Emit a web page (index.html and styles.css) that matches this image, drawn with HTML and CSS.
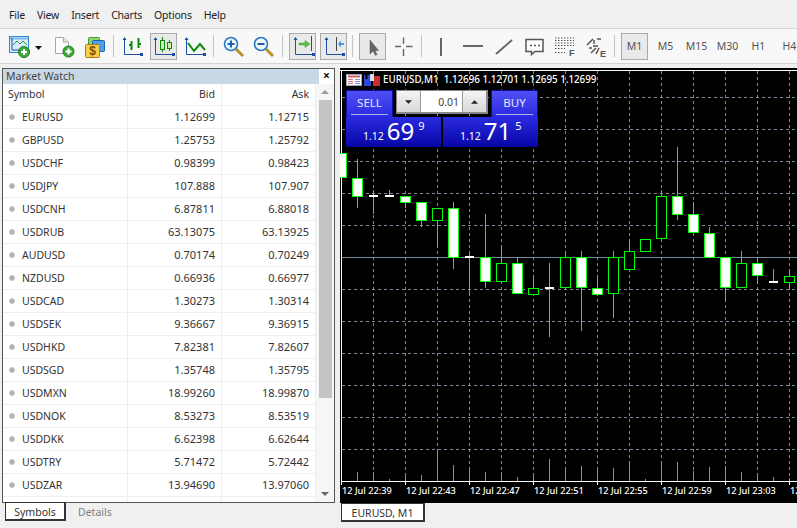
FILE: index.html
```html
<!DOCTYPE html>
<html lang="en">
<head>
<meta charset="utf-8">
<title>Market Watch</title>
<link rel="stylesheet" href="styles.css">
</head>
<body>
<div class="app">
  <nav class="menu">
    <span>File</span><span>View</span><span>Insert</span><span>Charts</span><span>Options</span><span>Help</span>
  </nav>
  <div class="toolbar">
    <div class="tool"><svg viewBox="0 0 27 27"><rect x="3.500" y="3.500" width="19" height="16" fill="#d8ecfa" stroke="#2f86d0"/><path d="M4 5.500H22" stroke="#7dbbe8" stroke-width="2"/><path d="M6 5V17H21" fill="none" stroke="#1a4fa5"/><path d="M7 12l4-4 3 3 3-3 4 4" fill="none" stroke="#2c9a3c"/><circle cx="18" cy="19" r="5.500" fill="#3fa93a" stroke="#1f7a25"/><path d="M15 19h6M18 16v6" stroke="#fff" stroke-width="2"/></svg></div>
    <div class="drop"><svg viewBox="0 0 14 27"><path d="M2 13h7l-3.500 4z" fill="#111"/></svg></div>
    <div class="tool"><svg viewBox="0 0 27 27"><path d="M4.500 4.500H12.500L17.500 9V20.500H4.500Z" fill="#fdfdfd" stroke="#a8a8a8"/><path d="M12.500 4.500V9H17.500" fill="#e4e4e4" stroke="#a8a8a8"/><circle cx="17.500" cy="18.500" r="5.500" fill="#3fa93a" stroke="#1f7a25"/><path d="M14.500 18.500h6M17.500 15.500v6" stroke="#fff" stroke-width="2"/></svg></div>
    <div class="tool"><svg viewBox="0 0 27 27"><rect x="6.500" y="4.500" width="11" height="10" rx="1" fill="#8ed46c" stroke="#3f9a3a"/><rect x="10.500" y="7.500" width="12" height="11" rx="1" fill="#4f9fe6" stroke="#1e5fb0"/><rect x="3.500" y="11.500" width="14" height="13" rx="1" fill="#f7cf4a" stroke="#a87d12"/><text x="10.500" y="22" class="dollar">$</text></svg></div>
    <div class="sep tight"></div>
    <div class="tool"><svg viewBox="0 0 27 27"><path class="axis" d="M5.500 5V21.500H22"/><path class="axhead" d="M3.500 7l2-3 2 3zM21 20h3v3h-3z"/><path d="M12.500 8V17M10 12h2.500M19.500 5V15M19.500 11H22" fill="none" stroke="#0c8a0c" stroke-width="2"/></svg></div>
    <div class="tool on"><svg viewBox="0 0 27 27"><path class="axis" d="M5.500 5V21.500H23"/><path class="axhead" d="M3.500 7l2-3 2 3zM22 20h3v3h-3z"/><path d="M12.500 4V19M19.500 7V18" stroke="#0c8a0c"/><rect x="10.500" y="7.500" width="4" height="9" fill="#c9f5a8" stroke="#0c8a0c"/><rect x="17.500" y="9.500" width="4" height="6" fill="#c9f5a8" stroke="#0c8a0c"/></svg></div>
    <div class="tool"><svg viewBox="0 0 27 27"><path class="axis" d="M5.500 5V21.500H23"/><path class="axhead" d="M3.500 7l2-3 2 3zM22 20h3v3h-3z"/><path d="M7 10l6 8 6-7 5 6" fill="none" stroke="#0c8a0c" stroke-width="2"/></svg></div>
    <div class="sep pushed"></div>
    <div class="tool"><svg viewBox="0 0 27 27"><path d="M16 16l7 7" stroke="#b8922a" stroke-width="3"/><circle cx="11" cy="11" r="6.500" fill="#eef6fd" stroke="#2a76c4" stroke-width="1.600"/><path d="M7.500 11h7M11 7.500v7" stroke="#1e5fb0" stroke-width="2"/></svg></div>
    <div class="tool"><svg viewBox="0 0 27 27"><path d="M15 16l7 7" stroke="#b8922a" stroke-width="3"/><circle cx="10" cy="11" r="6.500" fill="#eef6fd" stroke="#2a76c4" stroke-width="1.600"/><path d="M6.500 11h7" stroke="#1e5fb0" stroke-width="2"/></svg></div>
    <div class="sep"></div>
    <div class="tool on"><svg viewBox="0 0 27 27"><path class="axis" d="M6.500 5V21.500H25"/><path class="axhead" d="M4.500 7l2-3 2 3zM23 20h3v3h-3z"/><path d="M22.500 3V18" stroke="#444"/><path d="M10 10h6V7.500l5 3.500-5 3.500V12h-6z" fill="#5cc23c" stroke="#3f9a3a" stroke-width=".5"/></svg></div>
    <div class="tool on"><svg viewBox="0 0 27 27"><path class="axis" d="M6.500 5V21.500H24"/><path class="axhead" d="M4.500 7l2-3 2 3zM22 20h3v3h-3z"/><path d="M16.500 4V18" stroke="#444"/><path d="M24 10h-3V7.500L18 11l3 3.500V12h3z" fill="#4b92e8"/></svg></div>
    <div class="sep pushed"></div>
    <div class="tool on"><svg viewBox="0 0 27 27"><path d="M11 7V21L14 18L16.500 22.500L18 21.500L16 17.500H19.500Z" fill="#666" stroke="#555" stroke-width=".5"/></svg></div>
    <div class="tool"><svg viewBox="0 0 27 27"><path d="M13.500 4.500V11M13.500 16V23M5 13.500H11M16 13.500H22.500" stroke="#666" stroke-width="1.400"/></svg></div>
    <div class="sep"></div>
    <div class="tool"><svg viewBox="0 0 27 27"><path d="M13 5V23" stroke="#666" stroke-width="2"/></svg></div>
    <div class="tool"><svg viewBox="0 0 27 27"><path d="M4 13H24" stroke="#666" stroke-width="2"/></svg></div>
    <div class="tool"><svg viewBox="0 0 27 27"><path d="M6 21L22 7" stroke="#666" stroke-width="2"/></svg></div>
    <div class="tool"><svg viewBox="0 0 27 27"><path d="M5 6.500H22V18.500H14L10.500 21.500V18.500H5Z" fill="#fff" stroke="#555" stroke-width="1.500"/><path d="M9 12.500h2M13 12.500h2M17 12.500h2" stroke="#555" stroke-width="1.500"/></svg></div>
    <div class="tool"><svg viewBox="0 0 27 27"><path d="M3 5h19M3 7.500h19M3 10h19M3 12.500h19" stroke="#555" stroke-dasharray="1.500 1.500"/><path d="M3 15.500h10M3 19.500h10" stroke="#555" stroke-dasharray="1.500 1.500"/><text x="17" y="23" class="tag">F</text></svg></div>
    <div class="tool"><svg viewBox="0 0 27 27"><path d="M4 12l6-6M11 11V7M14 6h4M8 20l5-5M16 15l-3 6" stroke="#555" stroke-width="1.500"/><path d="M10 13h5M6 15h3" stroke="#555" stroke-width="1.500"/><text x="17" y="24" class="tag">E</text></svg></div>
    <div class="sep"></div>
    <div class="tool on period">M1</div>
    <div class="tool period">M5</div>
    <div class="tool period">M15</div>
    <div class="tool period">M30</div>
    <div class="tool period">H1</div>
    <div class="tool period">H4</div>
  </div>

  <main class="workspace">
    <section class="watch">
      <div class="watch-title"><span>Market Watch</span><span class="close">×</span></div>
      <div class="watch-body">
        <div class="quotes">
          <div class="row head"><span class="sym">Symbol</span><span class="num">Bid</span><span class="num">Ask</span></div>
          <div class="row"><span class="sym"><i class="dot"></i>EURUSD</span><span class="num">1.12699</span><span class="num">1.12715</span></div>
          <div class="row"><span class="sym"><i class="dot"></i>GBPUSD</span><span class="num">1.25753</span><span class="num">1.25792</span></div>
          <div class="row"><span class="sym"><i class="dot"></i>USDCHF</span><span class="num">0.98399</span><span class="num">0.98423</span></div>
          <div class="row"><span class="sym"><i class="dot"></i>USDJPY</span><span class="num">107.888</span><span class="num">107.907</span></div>
          <div class="row"><span class="sym"><i class="dot"></i>USDCNH</span><span class="num">6.87811</span><span class="num">6.88018</span></div>
          <div class="row"><span class="sym"><i class="dot"></i>USDRUB</span><span class="num">63.13075</span><span class="num">63.13925</span></div>
          <div class="row"><span class="sym"><i class="dot"></i>AUDUSD</span><span class="num">0.70174</span><span class="num">0.70249</span></div>
          <div class="row"><span class="sym"><i class="dot"></i>NZDUSD</span><span class="num">0.66936</span><span class="num">0.66977</span></div>
          <div class="row"><span class="sym"><i class="dot"></i>USDCAD</span><span class="num">1.30273</span><span class="num">1.30314</span></div>
          <div class="row"><span class="sym"><i class="dot"></i>USDSEK</span><span class="num">9.36667</span><span class="num">9.36915</span></div>
          <div class="row"><span class="sym"><i class="dot"></i>USDHKD</span><span class="num">7.82381</span><span class="num">7.82607</span></div>
          <div class="row"><span class="sym"><i class="dot"></i>USDSGD</span><span class="num">1.35748</span><span class="num">1.35795</span></div>
          <div class="row"><span class="sym"><i class="dot"></i>USDMXN</span><span class="num">18.99260</span><span class="num">18.99870</span></div>
          <div class="row"><span class="sym"><i class="dot"></i>USDNOK</span><span class="num">8.53273</span><span class="num">8.53519</span></div>
          <div class="row"><span class="sym"><i class="dot"></i>USDDKK</span><span class="num">6.62398</span><span class="num">6.62644</span></div>
          <div class="row"><span class="sym"><i class="dot"></i>USDTRY</span><span class="num">5.71472</span><span class="num">5.72442</span></div>
          <div class="row"><span class="sym"><i class="dot"></i>USDZAR</span><span class="num">13.94690</span><span class="num">13.97060</span></div>
          <div class="row"><span class="sym"></span><span class="num"></span><span class="num"></span></div>
        </div>
        <div class="scroll">
          <svg class="arrow" viewBox="0 0 18 8"><path d="M5 6h8L9 2z" fill="#999"/></svg>
          <div class="track"><div class="thumb"></div></div>
          <svg class="arrow" viewBox="0 0 18 8"><path d="M5 2h8L9 6z" fill="#666"/></svg>
        </div>
      </div>
    </section>

    <section class="chart">
      <svg class="plot" viewBox="340 68 457 435">
        <rect x="340" y="68" width="457" height="435" fill="#000"/>
        <path class="grid" d="M342 97.500H797M342 129.500H797M342 161.500H797M342 193.500H797M342 225.500H797M342 289.500H797M342 321.500H797M342 353.500H797M342 385.500H797M342 417.500H797M342 449.500H797"/>
        <path class="grid" d="M373.500 71V481M405.500 71V481M437.500 71V481M469.500 71V481M501.500 71V481M533.500 71V481M565.500 71V481M597.500 71V481M629.500 71V481M661.500 71V481M693.500 71V481M725.500 71V481M757.500 71V481M789.500 71V481"/>
        <path class="price" d="M342 257.500H797"/>
        <path class="wick" d="M357.500 159V208M373.500 190V214M389.500 190V195M405.500 203V208M421.500 221V227M437.500 221V247M453.500 202V269M469.500 252V295M485.500 214V288M501.500 245V283M517.500 257V263M533.500 275V288M549.500 263V337M565.500 251V257M581.500 251V331M597.500 275V296M613.500 251V318M629.500 239V251M661.500 190V196M677.500 147V220M693.500 202V214M709.500 227V233M725.500 257V300M741.500 251V263M757.500 257V284M773.500 269V281M789.500 269V289"/>
        <rect class="bull" x="336.500" y="153.500" width="10" height="24"/>
        <rect class="bull" x="352.500" y="178.500" width="10" height="18"/>
        <rect class="bull" x="400.500" y="196.500" width="10" height="6"/>
        <rect class="bull" x="416.500" y="202.500" width="10" height="18"/>
        <rect class="bear" x="432.500" y="208.500" width="10" height="12"/>
        <rect class="bull" x="448.500" y="208.500" width="10" height="49"/>
        <rect class="bull" x="480.500" y="257.500" width="10" height="24"/>
        <rect class="bear" x="496.500" y="263.500" width="10" height="18"/>
        <rect class="bull" x="512.500" y="263.500" width="10" height="30"/>
        <rect class="bear" x="528.500" y="288.500" width="10" height="6"/>
        <rect class="bear" x="560.500" y="257.500" width="10" height="30"/>
        <rect class="bull" x="576.500" y="257.500" width="10" height="30"/>
        <rect class="bull" x="592.500" y="288.500" width="10" height="6"/>
        <rect class="bear" x="608.500" y="257.500" width="10" height="36"/>
        <rect class="bear" x="624.500" y="251.500" width="10" height="18"/>
        <rect class="bear" x="640.500" y="239.500" width="10" height="12"/>
        <rect class="bear" x="656.500" y="196.500" width="10" height="42"/>
        <rect class="bull" x="672.500" y="196.500" width="10" height="18"/>
        <rect class="bull" x="688.500" y="214.500" width="10" height="18"/>
        <rect class="bull" x="704.500" y="233.500" width="10" height="24"/>
        <rect class="bull" x="720.500" y="257.500" width="10" height="30"/>
        <rect class="bear" x="736.500" y="263.500" width="10" height="24"/>
        <rect class="bull" x="752.500" y="263.500" width="10" height="12"/>
        <rect class="bear" x="784.500" y="276.500" width="10" height="6"/>
        <path class="doji" d="M369 196H378M385 196H394M465 257H474M545 288H554M769 282H778"/>
        <path class="vol" d="M357.500 472V481M373.500 472V481M389.500 479V481M405.500 473V481M421.500 475V481M437.500 449V481M453.500 465V481M469.500 467V481M485.500 472V481M501.500 472V481M517.500 477V481M533.500 473V481M549.500 459V481M565.500 467V481M581.500 466V481M597.500 467V481M613.500 468V481M629.500 461V481M645.500 479V481M661.500 461V481M677.500 462V481M693.500 471V481M709.500 467V481M725.500 466V481M741.500 472V481M757.500 473V481M773.500 477V481M789.500 478V481"/>
        <path class="frame" d="M340 70.500H797M341.500 70V481.500M341 481.500H797M341.500 481V485M405.500 481V485M469.500 481V485M533.500 481V485M597.500 481V485M661.500 481V485M725.500 481V485M789.500 481V485"/>
        <g class="times">
          <text x="342" y="494">12 Jul 22:39</text>
          <text x="406" y="494">12 Jul 22:43</text>
          <text x="470" y="494">12 Jul 22:47</text>
          <text x="534" y="494">12 Jul 22:51</text>
          <text x="598" y="494">12 Jul 22:55</text>
          <text x="662" y="494">12 Jul 22:59</text>
          <text x="726" y="494">12 Jul 23:03</text>
          <text x="790" y="494">12 Jul 23:07</text>
        </g>
      </svg>

      <div class="chart-head">
        <svg class="mini" viewBox="0 0 16 12"><rect x=".5" y=".5" width="15" height="11" fill="#fff" stroke="#9aa8c0"/><path d="M2 2.500h12" stroke="#d05858" stroke-width="2"/><path d="M2 5.500h5M2 7.500h5M2 9.500h5" stroke="#e07070"/><path d="M9 5.500h5M9 7.500h5M9 9.500h5" stroke="#7a98d8"/></svg>
        <svg class="mini tick" viewBox="0 0 16 12"><rect y="1" width="7" height="11" fill="#2c48d8"/><rect x="9" y="2" width="7" height="10" fill="#c83030"/><rect x="6" y="0" width="4" height="7" fill="#ddd"/><rect x="1.500" y="1" width="2" height="4" fill="#000"/></svg>
        <span class="quote">EURUSD,M1&nbsp; 1.12696 1.12701 1.12695 1.12699</span>
      </div>

      <div class="trade">
        <div class="trade-top">
          <div class="side"><span>SELL</span></div>
          <div class="lots">
            <span class="spin"><svg viewBox="0 0 8 4"><path d="M0 0h8L4 4z" fill="#222"/></svg></span>
            <span class="lot">0.01</span>
            <span class="spin"><svg viewBox="0 0 8 4"><path d="M0 4h8L4 0z" fill="#222"/></svg></span>
          </div>
          <div class="side"><span>BUY</span></div>
        </div>
        <div class="trade-low">
          <div class="price-box"><span class="big-fig">1.12</span><span class="pips">69</span><sup class="point">9</sup></div>
          <div class="price-box"><span class="big-fig">1.12</span><span class="pips">71</span><sup class="point">5</sup></div>
        </div>
      </div>
    </section>
  </main>

  <footer class="tabs">
    <div class="tabs-left"><span class="tab">Symbols</span><span class="tab-off">Details</span></div>
    <span class="tab chart-tab">EURUSD, M1</span>
  </footer>
</div>
</body>
</html>
```

FILE: styles.css
```css
* { box-sizing: border-box; }
html, body { margin: 0; height: 100%; overflow: hidden; }
body { background: #f0f0f0; font-family: "Noto Sans", "Open Sans", sans-serif; font-size: 10.5px; color: #333; }
.app { display: flex; flex-direction: column; width: 797px; height: 528px; overflow: hidden; }

.menu { display: flex; gap: 12px; height: 28px; padding: 1px 0 0 9px; align-items: center; font-size: 10.5px; letter-spacing: -0.2px; color: #222; }

.toolbar { display: flex; gap: 4px; align-items: center; height: 36px; padding-left: 6px; background: #f8f8f8; border-top: 1px solid #d4d4d4; border-bottom: 1px solid #d4d4d4; }
.tool { flex: none; width: 27px; height: 27px; border: 1px solid transparent; }
.tool svg { display: block; width: 27px; height: 27px; margin: -1px; }
.tool.on { background: #e9e9e9; border-color: #a9a9a9; }
.drop { flex: none; width: 14px; height: 27px; margin-left: -4px; }
.drop svg { display: block; width: 14px; height: 27px; }
.sep { flex: none; width: 1px; height: 22px; margin-right: 2px; background: #c4c4c4; }
.sep.tight { margin-right: 1px; }
.sep.pushed { margin-left: 1px; }
.period { display: flex; align-items: center; justify-content: center; font-size: 10.5px; color: #555; }
.axis { fill: none; stroke: #1a4fa5; stroke-width: 1; }
.axhead { fill: #1a4fa5; }
.dollar { font-family: "Liberation Sans", sans-serif; font-size: 12px; font-weight: 700; fill: #7a4d00; text-anchor: middle; }
.tag { font-family: "Liberation Sans", sans-serif; font-size: 9px; font-weight: 700; fill: #555; }

.workspace { display: flex; gap: 5px; height: 435px; margin-top: 4px; padding-left: 2px; }

.watch { flex: none; display: flex; flex-direction: column; width: 333px; border: 1px solid #555; background: #fff; overflow: hidden; }
.watch-title { display: flex; flex: none; justify-content: space-between; height: 15px; line-height: 14px; }
.watch-title > span:first-child { flex: 1; padding-left: 3px; background: #c9d8e6; color: #444; }
.close { flex: none; width: 15px; text-align: center; font-weight: 700; font-size: 12px; line-height: 13px; color: #111; background: #fff; }
.watch-body { display: flex; flex: 1; min-height: 0; }
.quotes { flex: none; width: 313px; }
.row { display: grid; grid-template-columns: 125px 94px 94px; height: 23px; border-bottom: 1px solid #efefef; color: #333; }
.row.head { height: 22px; }
.row > span { display: flex; align-items: center; padding: 0 6px 1px; border-right: 1px solid #efefef; }
.num { justify-content: flex-end; font-size: 11px; }
.row.head .num { font-size: 10.5px; }
.row > .sym { padding-left: 5px; }
.dot { flex: none; width: 6px; height: 6px; margin: 1px 7px 0 1px; border-radius: 50%; background: #b0b0b0; border: 1px solid #c4c4c4; }
.scroll { display: flex; flex: 1; flex-direction: column; background: #f6f6f6; }
.arrow { flex: none; width: 18px; height: 8px; margin: 4px 0; }
.track { flex: 1; padding: 0 2px 0 3px; }
.thumb { height: 298px; background: #c4c4c4; }

.chart { position: relative; flex: 1; min-width: 0; overflow: hidden; }
.plot { display: block; width: 457px; height: 435px; }
.grid { fill: none; stroke: #778899; stroke-dasharray: 3 3; shape-rendering: crispEdges; }
.price { stroke: #778899; shape-rendering: crispEdges; }
.wick { fill: none; stroke: #0f0; shape-rendering: crispEdges; }
.bull { fill: #fff; stroke: #0f0; shape-rendering: crispEdges; }
.bear { fill: #000; stroke: #0f0; shape-rendering: crispEdges; }
.doji { stroke: #fff; stroke-width: 2; shape-rendering: crispEdges; }
.vol { stroke: #32cd32; shape-rendering: crispEdges; }
.frame { fill: none; stroke: #fff; shape-rendering: crispEdges; }
.times text { font-family: "Noto Sans", sans-serif; font-size: 9.2px; fill: #fff; font-weight: 500; }

.chart-head { position: absolute; left: 6px; top: 6px; display: flex; align-items: center; height: 12px; color: #fff; }
.mini { display: block; flex: none; width: 16px; height: 12px; }
.mini.tick { margin-left: 2px; }
.quote { font-size: 9.8px; font-weight: 500; white-space: nowrap; margin: 0 0 1px 3px; }

.trade { position: absolute; left: 6px; top: 22px; width: 192px; color: #fff; }
.trade-top { display: flex; justify-content: space-between; height: 27px; }
.side { width: 47px; padding: 0 4px; background: linear-gradient(#5050f4, #2a2ae0); border: 1px solid #0c0ca0; border-bottom: 0; text-align: center; color: #e4e4ff; font-size: 11.5px; line-height: 23px; }
.side span { display: block; border-bottom: 1px solid #b0b0f0; }
.lots { display: flex; width: 92px; height: 24px; border: 1px solid #888; border-right-width: 2px; border-bottom-width: 2px; background: #fff; color: #444; }
.spin { display: flex; align-items: center; justify-content: center; width: 23px; background: linear-gradient(#f4f4f4, #d8d8d8); }
.spin svg { width: 7px; height: 4px; }
.lot { flex: 1; padding-right: 3px; text-align: right; line-height: 22px; font-size: 10.5px; border-left: 1px solid #999; border-right: 1px solid #999; }
.trade-low { display: flex; gap: 2px; height: 30px; }
.price-box { flex: 1; display: flex; align-items: flex-end; height: 30px; padding: 0 0 4px 17px; background: linear-gradient(#2a2ae0, #0606a6); line-height: 1; }
.big-fig { font-size: 10.5px; padding-bottom: 2px; }
.pips { font-size: 24px; margin: 0 3px; }
.point { align-self: flex-start; font-size: 11px; margin: 3px 0 0 1px; line-height: 1; }

.tabs { display: flex; flex: 1; padding-left: 5px; align-items: flex-start; }
.tabs-left { display: flex; width: 336px; align-items: center; }
.tab { display: block; height: 19px; margin-top: -1px; padding: 0; background: #fff; border: 1px solid #333; border-right-width: 2px; border-bottom-width: 2px; text-align: center; line-height: 18px; color: #333; position: relative; }
.tabs-left .tab { width: 61px; }
.tab-off { margin-left: 12px; color: #808080; }
.chart-tab { width: 84px; margin-top: 0; }
```
